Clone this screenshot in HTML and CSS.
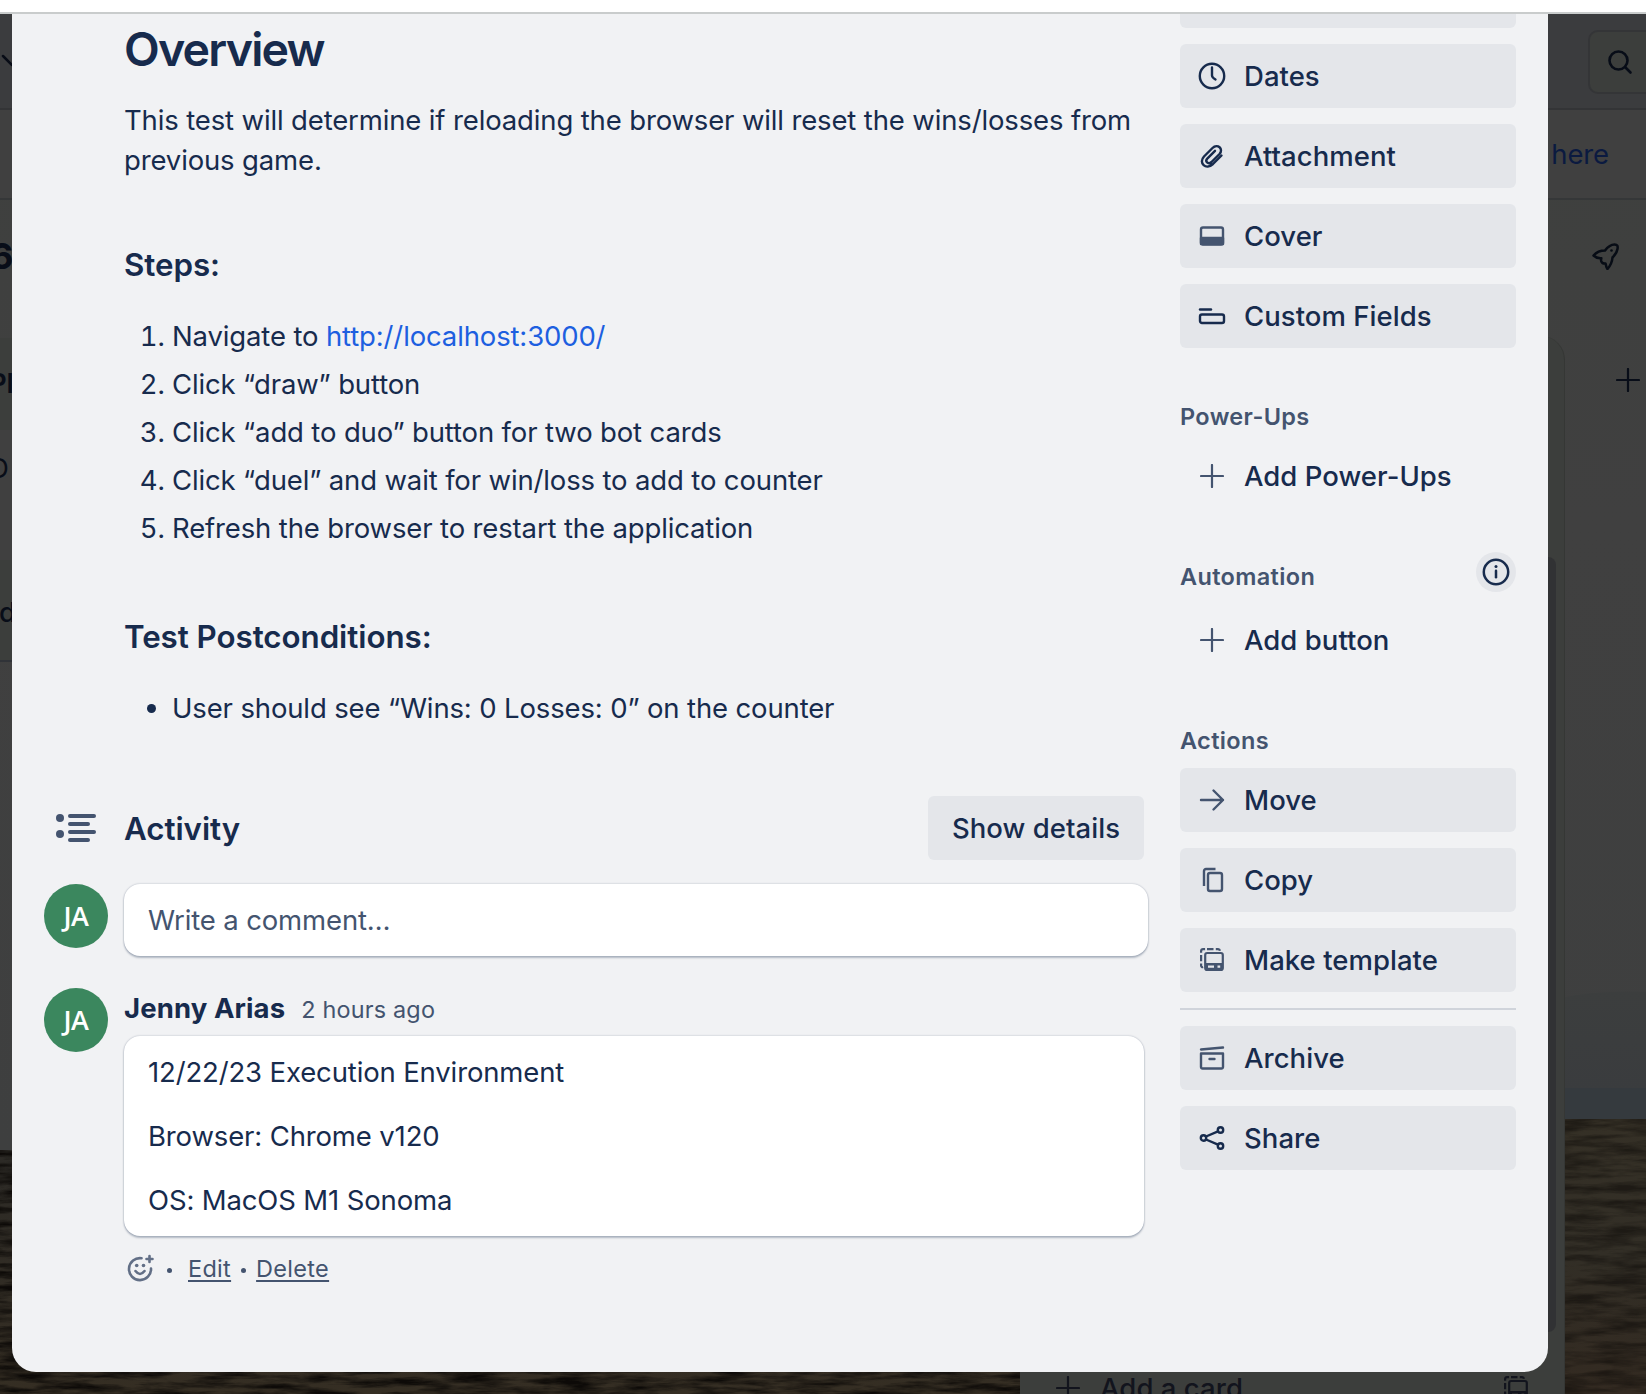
FILE: index.html
```html
<!DOCTYPE html>
<html lang="en">
<head>
<meta charset="utf-8">
<title>Card</title>
<link rel="stylesheet" href="styles.css">
</head>
<body>
<svg class="sprite" aria-hidden="true">
  <symbol id="plus" viewBox="0 0 24 24"><path d="M12 1v22M1 12h22" fill="none" stroke="currentColor" stroke-width="2.200" stroke-linecap="round"/></symbol>
  <symbol id="template" viewBox="0 0 24 24"><g fill="none" stroke="currentColor" stroke-width="2.200" stroke-linecap="butt"><path d="M1.100 4.800V3a2 2 0 0 1 2-1.900h2M7 1.100h6.500M15.800 1.100h2.200a2 2 0 0 1 2 1.600M1.100 7v6.300M1.100 15.500v2a1.500 1.500 0 0 0 2 1.500"/><rect x="5.200" y="5" width="17.600" height="17" rx="2"/></g><path fill="currentColor" stroke="none" fill-rule="evenodd" d="M5 15h18v7H5zM8 17.500v2.200h6v-2.200zM17.500 17.500v2.200h2.700v-2.200z"/></symbol>
</svg>
<div class="browser-bar"></div>
<div class="stage">
  <div class="board">
    <svg class="photo" viewBox="0 0 1646 1380" preserveAspectRatio="none" aria-hidden="true">
      <defs>
        <linearGradient id="sky" x1="0" y1="0" x2="0" y2="1"><stop offset="0" stop-color="#3e403e"/><stop offset=".45" stop-color="#404040"/><stop offset="1" stop-color="#3e3f3f"/></linearGradient>
        <linearGradient id="hill" x1="0" y1="0" x2="0" y2="1"><stop offset="0" stop-color="#3c3e3e"/><stop offset="1" stop-color="#393b3e"/></linearGradient>
        <linearGradient id="field" x1="0" y1="0" x2="0" y2="1"><stop offset="0" stop-color="#353026"/><stop offset=".5" stop-color="#322e26"/><stop offset="1" stop-color="#332a21"/></linearGradient>
        <linearGradient id="fieldLeft" x1="0" y1="0" x2="0" y2="1"><stop offset="0" stop-color="#2c2a26"/><stop offset="1" stop-color="#352e23"/></linearGradient>
        <filter id="grain" x="0" y="0" width="1" height="1" color-interpolation-filters="sRGB"><feTurbulence type="fractalNoise" baseFrequency=".02 .14" numOctaves="5" seed="4"/><feColorMatrix values="0 0 0 0 .05  0 0 0 0 .04  0 0 0 0 .03  2.400 0 0 0 -.85"/></filter>
      </defs>
      <rect width="1646" height="1140" fill="url(#sky)"/>
      <path d="M1560 984q40-8 86-6v150h-86z" fill="url(#hill)"/>
      <path d="M1560 1074h86v50h-86z" fill="#353a3e"/>
      <path d="M0 1136h1020v244H0z" fill="url(#fieldLeft)"/>
      <path d="M1020 1105h626v275h-626z" fill="url(#field)"/>
      <rect y="1136" width="1020" height="244" filter="url(#grain)"/>
      <rect x="1560" y="1105" width="86" height="275" filter="url(#grain)" opacity=".55"/>
    </svg>
    <header class="top"><svg class="chevron" viewBox="0 0 12 14"><path d="M3 2l9 9" stroke="#080c16" stroke-width="2.500" stroke-linecap="round"/></svg>
      <div class="search"><svg width="26" height="26" viewBox="0 0 26 26" fill="none" stroke="#070c17" stroke-width="2.600" stroke-linecap="round"><circle cx="11.500" cy="11.500" r="9"/><path d="M18.500 18.500l5 5"/></svg></div>
    </header>
    <div class="banner"><span>here</span></div>
    <div class="board-title"><span>6</span><svg width="28" height="28" viewBox="0 0 28 28" fill="none" stroke="#070c15" stroke-width="2.500" stroke-linejoin="round"><path d="M2.500 13.500C6 9.500 10 8.500 14 8.500 17 4.500 20 2.500 23.500 2.500c3 0 3.500 1.500 3 4.500-.5 3-2.500 6-5 8.500-.3 4-2 8-5 11.500-1.500-1.500-1.200-3.500-2-5.500-2.500.3-4.500-.8-4.500-3.500l.3-1.800c-2.500.2-5.500-.5-7.800-2.700z"/><circle cx="20.500" cy="8.500" r="1.300" fill="#070c15" stroke="none"/></svg></div>
    <div class="left-list"><b>Pl</b><span>D</span><strong>d</strong></div>
    <div class="list"><i></i><div class="add-card"><svg width="24" height="24"><use href="#plus"/></svg><span>Add a card</span><svg width="24" height="24"><use href="#template"/></svg></div></div>
    <svg class="add-list" width="24" height="24"><use href="#plus"/></svg>
  </div>

  <main class="modal">
    <section class="content">
      <article class="description">
        <h1>Overview</h1>
        <p class="intro">This test will determine if reloading the browser will reset the wins/losses from<br>previous game.</p>
        <h2 class="steps-title">Steps:</h2>
        <ol class="steps">
          <li>Navigate to <a>http://localhost:3000/</a></li>
          <li>Click “draw” button</li>
          <li>Click “add to duo” button for two bot cards</li>
          <li>Click “duel” and wait for win/loss to add to counter</li>
          <li>Refresh the browser to restart the application</li>
        </ol>
        <h2 class="post-title">Test Postconditions:</h2>
        <ul class="post"><li>User should see “Wins: 0 Losses: 0” on the counter</li></ul>
      </article>

      <div class="activity-head">
        <svg width="40" height="28" viewBox="0 0 40 28" fill="#44546f"><circle cx="4" cy="4" r="4"/><circle cx="4" cy="20" r="4"/><rect x="12" y="0" width="28" height="4" rx="2"/><rect x="12" y="8" width="22" height="4" rx="2"/><rect x="12" y="16" width="28" height="4" rx="2"/><rect x="12" y="24" width="22" height="4" rx="2"/></svg>
        <h2>Activity</h2>
        <button class="details">Show details</button>
      </div>
      <div class="row new-comment"><span class="avatar">JA</span><div class="bubble input">Write a comment…</div></div>
      <div class="row comment"><span class="avatar">JA</span>
        <div class="comment-main">
          <div class="byline"><b>Jenny Arias</b><span>2 hours ago</span></div>
          <div class="bubble text"><p>12/22/23 Execution Environment</p><p>Browser: Chrome v120</p><p>OS: MacOS M1 Sonoma</p></div>
          <div class="meta"><svg width="28" height="28" viewBox="0 0 28 28" fill="none" stroke="#626f86" stroke-width="2.600" stroke-linecap="round"><path d="M14.500 4.200A11 11 0 1 0 24 14.500"/><path d="M8.500 17q4.500 6 9 0"/><path d="M22.500 2v6M19.500 5h6"/><g fill="#626f86" stroke="none"><circle cx="9.700" cy="11.500" r="1.800"/><circle cx="16.500" cy="11.500" r="1.800"/></g></svg><i class="dot first"></i><a>Edit</a><i class="dot"></i><a>Delete</a></div>
        </div>
      </div>
    </section>

    <aside class="side">
      <div class="btn cut"></div>
      <div class="btn"><svg viewBox="0 0 32 32" class="dark"><circle cx="16" cy="16" r="12.200"/><path d="M16 7.500v8q0 2 3.500 4"/></svg>Dates</div>
      <div class="btn"><svg viewBox="0 0 32 32" class="dark"><path d="M25.500 15.500l-8.500 8.500c-7 6.500-15-1-9-7.500l8.500-8.500c5-5 11.500 1 7 6l-8 8c-3.500 3-7-.5-4-3.700l7.500-7.500"/></svg>Attachment</div>
      <div class="btn"><svg viewBox="0 0 32 32"><rect x="5" y="7.500" width="22" height="17" rx="2"/><path d="M5 18h22v6H5z" fill="currentColor"/></svg>Cover</div>
      <div class="btn"><svg viewBox="0 0 32 32" class="dark"><path d="M4 9.500h11"/><rect x="4" y="14.500" width="24" height="8.500" rx="2"/></svg>Custom Fields</div>
      <h3 class="h-power">Power-Ups</h3>
      <div class="btn plain"><svg viewBox="-4 -4 32 32"><use href="#plus" width="24" height="24"/></svg>Add Power-Ups</div>
      <div class="auto-head"><h3>Automation</h3><span class="info"><svg viewBox="0 0 28 28" width="28" height="28" fill="none" stroke="#172b4d" stroke-width="2.500" stroke-linecap="round"><circle cx="14" cy="14" r="12.200"/><path d="M14 12.800v6.500"/><circle cx="14" cy="8.600" r="1.500" fill="#172b4d" stroke="none"/></svg></span></div>
      <div class="btn plain"><svg viewBox="-4 -4 32 32"><use href="#plus" width="24" height="24"/></svg>Add button</div>
      <h3 class="h-actions">Actions</h3>
      <div class="btn"><svg viewBox="0 0 32 32"><path d="M5 16h22M17.500 6.500l9.500 9.500-9.500 9.500"/></svg>Move</div>
      <div class="btn"><svg viewBox="0 0 32 32"><path d="M8 22V7a2 2 0 0 1 2-2h9.500" stroke-linecap="butt"/><rect x="12" y="9" width="14" height="18" rx="2"/></svg>Copy</div>
      <div class="btn"><svg viewBox="-4 -4 32 32"><use href="#template" width="24" height="24"/></svg>Make template</div>
      <hr>
      <div class="btn"><svg viewBox="0 0 32 32"><path d="M5 7.500l22-2"/><path d="M5 11.500h22V25a1.500 1.500 0 0 1-1.500 1.500h-19A1.500 1.500 0 0 1 5 25z"/><path d="M13.500 17h5"/></svg>Archive</div>
      <div class="btn"><svg viewBox="0 0 32 32" class="dark"><circle cx="7.500" cy="16" r="2.700"/><circle cx="24.500" cy="8" r="2.700"/><circle cx="24.500" cy="24" r="2.700"/><path d="M10 14.500l12-5.200M10 17.500l12 5.200"/></svg>Share</div>
    </aside>
  </main>
</div>
</body>
</html>
```
FILE: styles.css
```css
* { box-sizing: border-box; }
body { margin: 0; width: 1646px; height: 1394px; overflow: hidden; display: flex; flex-direction: column; font: 400 27.5px/40px Inter, "Liberation Sans", sans-serif; letter-spacing: -.14px; color: #172b4d; background: #3e403e; }
h1, h2, h3, p, ol, ul { margin: 0; }
svg { display: block; flex: none; }
.sprite { position: absolute; width: 0; height: 0; }
.browser-bar { height: 14px; flex: none; background: #fff; border-bottom: 2px solid #c9cccc; }
.stage { position: relative; height: 1380px; flex: none; overflow: hidden; padding-left: 12px; }

.board { position: absolute; inset: 0; color: #080d18; }
.photo { position: absolute; inset: 0; width: 1646px; height: 1380px; }
.top { position: relative; height: 96px; background: #3b3c3e; border-bottom: 2px solid #333436; display: flex; justify-content: space-between; align-items: center; }
.chevron { width: 12px; height: 14px; }
.search { width: 58px; height: 64px; border: 2px solid #343537; border-right: 0; border-radius: 10px 0 0 10px; background: #3c3e3c; display: flex; align-items: center; padding-left: 17px; margin-top: 2px; }
.banner { position: relative; height: 90px; background: #404040; border-bottom: 2px solid #353738; color: #0b1a40; display: flex; align-items: center; justify-content: flex-end; padding-right: 37px; }
.board-title { position: relative; height: 112px; display: flex; align-items: center; justify-content: space-between; padding-right: 27px; font-size: 36px; font-weight: 700; }
.board-title span { margin-left: -10px; }
.left-list { position: absolute; left: 0; top: 324px; width: 30px; height: 324px; background: linear-gradient(#3c3e3c 0 92px, #404040 92px 222px, #3c3e3c 222px 322px, #303338 322px 324px); }
.left-list > * { position: absolute; left: -11px; top: 25px; }
.left-list > b { font-weight: 600; }
.left-list > span { top: 110px; left: -11px; }
.left-list > strong { top: 254px; left: -1px; font-weight: 500; }
.list { position: absolute; left: 1020px; top: 322px; width: 545px; height: 1120px; border-radius: 24px; background: #3c3e3c; border-right: 1px solid #353735; }
.list i { position: absolute; left: 520px; top: 221px; width: 16px; height: 775px; border-radius: 8px; background: #313234; }
.add-card { position: absolute; left: 36px; right: 36px; top: 1032px; height: 40px; display: flex; align-items: center; font-weight: 500; letter-spacing: .05px; color: #12141d; }
.add-card span { margin: 0 auto 0 20px; }
.add-list { position: absolute; left: 1616px; top: 354px; }

.modal { position: relative; width: 1536px; height: 1358px; background: #f1f2f4; border-radius: 0 0 24px 24px; display: flex; justify-content: space-between; padding: 0 32px; }
.content { width: 1104px; }
.description { padding-left: 80px; white-space: nowrap; }
h1 { font-size: 46.5px; line-height: 56px; font-weight: 600; letter-spacing: -1.8px; padding-top: 7px; }
.intro { margin-top: 23px; }
h2 { font-size: 31.3px; line-height: 40px; font-weight: 600; letter-spacing: -.05px; }
.steps-title { margin-top: 65px; }
.steps { margin-top: 31px; padding-left: 48px; display: flex; flex-direction: column; gap: 8px; }
.steps a { color: #1d5fe0; }
.post-title { margin-top: 69px; }
.post { margin-top: 31px; padding-left: 48px; }
.activity-head { display: flex; align-items: center; margin-top: 68px; padding: 0 4px 0 12px; height: 64px; }
.activity-head h2 { margin-left: 28px; padding-top: 1px; }
.details { margin-left: auto; width: 216px; height: 64px; border: 0; border-radius: 6px; background: #e4e6ea; color: inherit; font: 500 27.5px/40px Inter, sans-serif; letter-spacing: .05px; padding: 0; }
.row { display: flex; gap: 16px; }
.new-comment { margin-top: 24px; }
.avatar { width: 64px; height: 64px; border-radius: 50%; background: #3b875e; color: #fff; font: 600 27px/64px "Open Sans", sans-serif; text-align: center; flex: none; letter-spacing: -.5px; }
.bubble { background: #fff; border-radius: 16px; box-shadow: 0 2px 2px #091e4240, 0 0 2px #091e424f; padding: 0 24px; }
.input { width: 1024px; height: 72px; line-height: 73px; color: #44546f; }
.comment { margin-top: 32px; }
.byline { display: flex; align-items: baseline; gap: 16px; height: 48px; }
.byline b { font-weight: 700; letter-spacing: .1px; }
.byline span { font-size: 23.4px; color: #44546f; letter-spacing: .2px; }
.text { width: 1020px; height: 200px; padding-top: 16px; display: flex; flex-direction: column; gap: 24px; }
.meta { display: flex; align-items: center; height: 64px; color: #44546f; font-size: 23.5px; letter-spacing: .3px; padding-left: 3px; }
.meta a { text-decoration: underline; text-underline-offset: 3px; text-decoration-thickness: 2px; padding-top: 1px; }
.dot { width: 5px; height: 5px; border-radius: 50%; background: #44546f; margin: 4px 10px 0; }
.dot.first { margin: 4px 16px 0 12px; }

.side { width: 336px; display: flex; flex-direction: column; }
.btn { height: 64px; flex: none; margin-bottom: 16px; border-radius: 6px; background: #e4e6ea; display: flex; align-items: center; gap: 16px; padding-left: 16px; font-weight: 500; letter-spacing: .04px; }
.btn svg { width: 32px; height: 32px; color: #44546f; fill: none; stroke: currentColor; stroke-width: 2.400; stroke-linecap: round; stroke-linejoin: round; }
.btn svg.dark { color: #172b4d; }
.cut { height: 14px; border-radius: 0 0 6px 6px; }
.plain { background: none; margin-bottom: 0; }
h3 { font-size: 23.5px; line-height: 32px; font-weight: 600; color: #44546f; letter-spacing: .35px; }
.h-power { margin: 37px 0 11px; }
.auto-head { height: 40px; margin: 44px 0 16px; display: flex; justify-content: space-between; }
.auto-head h3 { margin-top: 9px; }
.info { width: 40px; height: 40px; border-radius: 50%; background: #e4e6ea; display: grid; place-items: center; }
.h-actions { margin: 53px 0 11px; }
hr { width: 100%; height: 2px; border: 0; background: #d0d4db; margin: 0 0 16px; flex: none; }
```
